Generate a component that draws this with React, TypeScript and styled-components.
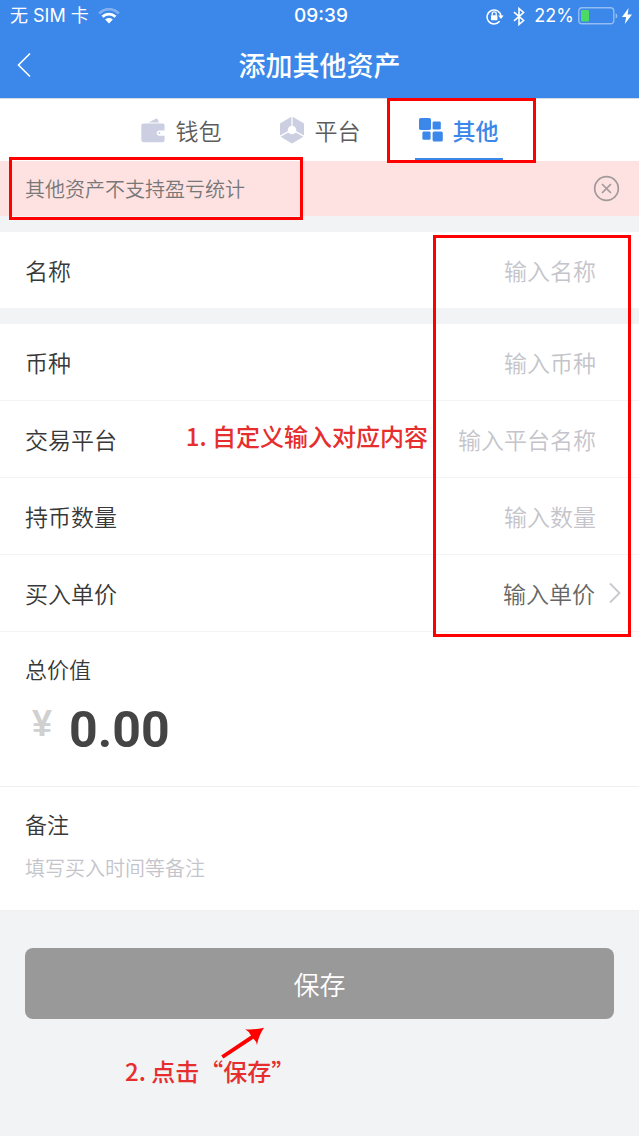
import React from 'react';
import styled, { createGlobalStyle } from 'styled-components';

const GlobalStyle = createGlobalStyle`
  * { box-sizing: border-box; }
  body {
    margin: 0;
    background: #f1f3f5;
    color: #383838;
    font-family: 'Noto Sans CJK SC', sans-serif;
    font-weight: 350;
  }
  button, input, textarea { font: inherit; color: inherit; margin: 0; }
  button { cursor: pointer; }
`;

const Page = styled.main`
  display: flex;
  flex-direction: column;
  min-height: 100vh;
`;

const Header = styled.header`
  background: #3b87ea;
  color: #fff;
  border-bottom: 1px solid #d3dbe6;
`;

const StatusBar = styled.div`
  display: grid;
  grid-template-columns: 1fr auto 1fr;
  align-items: center;
  height: 32px;
  padding: 0 7px 0 10px;
  font-family: Inter, 'Noto Sans CJK SC', sans-serif;
  font-size: 18px;
  font-weight: 400;
  line-height: 32px;
`;

const StatusGroup = styled.div<{ $end?: boolean }>`
  display: flex;
  align-items: center;
  gap: 9px;
  justify-content: ${p => (p.$end ? 'flex-end' : 'flex-start')};
`;

const Power = styled.div`
  display: flex;
  align-items: center;
  gap: 4px;
`;

const Clock = styled.time`
  font-size: 19px;
  font-weight: 500;
`;

const NavBar = styled.div`
  display: grid;
  grid-template-columns: 48px 1fr 48px;
  align-items: center;
  height: 66px;
`;

const BackButton = styled.button`
  display: flex;
  align-items: center;
  height: 48px;
  padding: 0 0 0 17px;
  border: 0;
  background: none;
`;

const Title = styled.h1`
  margin: 0;
  text-align: center;
  font-size: 27px;
  line-height: 40px;
  font-weight: 500;
`;

const Tabs = styled.div`
  display: flex;
  justify-content: center;
  gap: 51px;
  height: 62px;
  background: #fff;
`;

const Tab = styled.button<{ $active?: boolean }>`
  position: relative;
  display: flex;
  align-items: center;
  justify-content: center;
  gap: 10px;
  width: 88px;
  padding: 2px 0 0;
  border: 0;
  border-bottom: 3px solid ${p => (p.$active ? '#3b87ea' : 'transparent')};
  background: none;
  color: ${p => (p.$active ? '#3b87ea' : '#5c5c5c')};
  font-weight: ${p => (p.$active ? 500 : 350)};
  font-size: 23px;
  line-height: 32px;
  white-space: nowrap;
`;

const Highlight = styled.span`
  position: absolute;
  z-index: 2;
  border: 3px solid #fe0000;
  pointer-events: none;
`;

const TabHighlight = styled(Highlight)`
  inset: -1px -33px -5px -28px;
`;

const NoticeHighlight = styled(Highlight)`
  inset: -4px auto -4px 9px;
  width: 294px;
`;

const FieldsHighlight = styled(Highlight)`
  inset: 3px 8px -5px auto;
  width: 198px;
`;

const Notice = styled.div`
  position: relative;
  display: flex;
  align-items: center;
  justify-content: space-between;
  height: 55px;
  padding: 0 19px 0 25px;
  background: #fee2e2;
  color: #777;
  font-size: 20px;
  line-height: 28px;
`;

const CloseButton = styled.button`
  display: flex;
  padding: 0;
  border: 0;
  background: none;
`;

const Fields = styled.div`
  position: relative;
  display: flex;
  flex-direction: column;
  gap: 15px;
  margin-top: 16px;
`;

const Group = styled.div`
  background: #fff;
`;

const Row = styled.div`
  display: flex;
  align-items: center;
  height: 77px;
  padding: 0 17px 0 25px;
  border-bottom: 1px solid #f3f4f5;
  font-size: 23px;
  line-height: 32px;
`;

const RowInput = styled.input`
  flex: 1;
  min-width: 0;
  padding: 0 26px 0 0;
  border: 0;
  outline: 0;
  background: none;
  text-align: right;
  &::placeholder { color: #c4c4ca; opacity: 1; }
`;

const PickerButton = styled.button`
  display: flex;
  flex: 1;
  align-items: center;
  justify-content: flex-end;
  gap: 13px;
  padding: 0;
  border: 0;
  background: none;
  color: #666;
`;

const Block = styled.section`
  padding: 20px 25px 28px;
  background: #fff;
  border-bottom: 1px solid #eff0f1;
`;

const BlockLabel = styled.label`
  display: block;
  font-size: 22px;
  line-height: 32px;
`;

const Amount = styled.output`
  display: flex;
  align-items: center;
  gap: 17px;
  margin-top: 18px;
  padding-left: 7px;
  line-height: 56px;
`;

const Currency = styled.span`
  padding-bottom: 12px;
  color: #d0d0d0;
  font-family: 'Liberation Sans', sans-serif;
  font-size: 36px;
  font-weight: 700;
  line-height: 44px;
`;

const Value = styled.span`
  color: #444;
  font-family: Roboto, sans-serif;
  font-size: 50px;
  font-weight: 700;
`;

const Note = styled.textarea`
  display: block;
  width: 100%;
  height: 28px;
  margin-top: 15px;
  padding: 0;
  border: 0;
  outline: 0;
  resize: none;
  overflow: hidden;
  font-size: 20px;
  line-height: 28px;
  &::placeholder { color: #c4c4ca; opacity: 1; }
`;

const Footer = styled.div`
  position: relative;
  padding: 37px 25px 118px;
`;

const SaveButton = styled.button`
  width: 100%;
  height: 71px;
  border: 0;
  border-radius: 8px;
  background: #999;
  color: #fff;
  font-size: 26px;
  line-height: 40px;
`;

const Callout = styled.p`
  position: absolute;
  z-index: 3;
  margin: 0;
  color: #e62e2e;
  font-size: 24px;
  font-weight: 500;
  line-height: 32px;
  white-space: nowrap;
  pointer-events: none;
`;

const FieldsCallout = styled(Callout)`
  top: 188px;
  right: 211px;
`;

const SaveCallout = styled(Callout)`
  top: 144px;
  left: 125px;
`;

const Arrow = styled.svg`
  position: absolute;
  top: 115px;
  left: 220px;
`;

const Wifi = () => (
  <svg width="22" height="16" viewBox="0 0 22 16" fill="none" stroke="#fff" aria-hidden="true">
    <path d="M1.2 5.4C6.7-.2 15.3-.2 20.8 5.4" strokeWidth="2.8" opacity=".35" />
    <path d="M4.5 8.8c3.7-3.7 9.3-3.7 13 0" strokeWidth="2.8" />
    <path d="M7.2 11.6c2.2-2 5.4-2 7.6 0L11 15.6z" fill="#fff" stroke="none" />
  </svg>
);

const RotationLock = () => (
  <svg width="18" height="17" viewBox="0 0 18 17" fill="none" stroke="#fff" aria-hidden="true">
    <path d="M13.600 13.200A7 7 0 1 1 15 8" strokeWidth="1.5" />
    <path d="M12.2 7.6h5.4L15 11z" fill="#fff" stroke="none" />
    <rect x="5" y="7.2" width="6.4" height="5" rx=".6" fill="#fff" stroke="none" />
    <path d="M6.2 7.6V5.8a2 2 0 0 1 4 0v1.8" strokeWidth="1.3" />
  </svg>
);

const Bluetooth = () => (
  <svg width="12" height="19" viewBox="0 0 12 19" fill="none" stroke="#fff" strokeWidth="1.6" aria-hidden="true">
    <path d="M1 5.2l9.600 8.300L6 17.500v-16l4.600 4L1 13.800" />
  </svg>
);

const Battery = () => (
  <svg width="40" height="18" viewBox="0 0 40 18" aria-hidden="true">
    <rect x=".8" y=".8" width="35" height="16" rx="3.4" fill="none" stroke="#fff" strokeOpacity=".45" strokeWidth="1.4" />
    <rect x="3" y="3" width="8" height="11.6" rx="1" fill="#4cd964" />
    <path d="M37.6 6.2c2.4.8 2.4 4.6 0 5.4z" fill="#fff" opacity=".45" />
  </svg>
);

const Bolt = () => (
  <svg width="10" height="16" viewBox="0 0 10 16" fill="#fff" aria-hidden="true">
    <path d="M6.6 0L0 9h4.2L2.8 16 10 6.4H5.6z" />
  </svg>
);

const Wallet = () => (
  <svg width="26" height="26" viewBox="0 0 26 26" fill="#cccfe1" aria-hidden="true">
    <path d="M8.600 5.400l7.200-3.600c.8-.4 1.300-.2 1.700.5l1.600 3.100z" />
    <path d="M3.500 6.400h19A2 2 0 0 1 24.600 8.400v5h-5.200a2.700 2.700 0 0 0 0 5.400h5.200v4.500a2 2 0 0 1-2 2h-19a2.300 2.300 0 0 1-2.300-2.300V8.600a2.200 2.200 0 0 1 2.200-2.200z" />
    <circle cx="19.400" cy="16.100" r="1" />
  </svg>
);

const Cube = () => (
  <svg width="26" height="28" viewBox="0 0 26 28" fill="#cccfe1" aria-hidden="true">
    <path d="M12.400 .8v9.400L8.200 15.600 1 19.600V8.200c0-.6.200-.9.700-1.200z" />
    <path d="M13.600 .8v9.400l4.200 5.400 7.200 4V8.200c0-.6-.2-.9-.7-1.200z" />
    <path d="M8.800 16.800h8.400l7.200 4L14 26.900c-.8.400-1.200.4-2 0L1.600 20.800z" />
    <circle cx="13" cy="14" r="4.200" fill="#fff" />
  </svg>
);

const Tiles = () => (
  <svg width="24" height="24" viewBox="0 0 24 24" fill="#3b87ea" aria-hidden="true">
    <rect x="0" y="0" width="12" height="12" rx="1.800" />
    <rect x="13.600" y="3.400" width="8.200" height="8.200" rx="1.400" />
    <rect x="3.400" y="13.600" width="8.200" height="8.200" rx="1.400" />
    <rect x="13.600" y="13.400" width="10.200" height="10.200" rx="1.600" />
  </svg>
);

interface FieldProps {
  id: string;
  label: string;
  placeholder: string;
}

const Field = ({ id, label, placeholder }: FieldProps) => (
  <Row>
    <label htmlFor={id}>{label}</label>
    <RowInput id={id} placeholder={placeholder} />
  </Row>
);

export default function App() {
  return (
    <Page>
      <GlobalStyle />
      <Header>
        <StatusBar>
          <StatusGroup>
            <span>无 SIM 卡</span>
            <Wifi />
          </StatusGroup>
          <Clock>09:39</Clock>
          <StatusGroup $end>
            <RotationLock />
            <Bluetooth />
            <Power>
              <span>22%</span>
              <Battery />
              <Bolt />
            </Power>
          </StatusGroup>
        </StatusBar>
        <NavBar>
          <BackButton aria-label="返回">
            <svg width="14" height="26" viewBox="0 0 14 26" fill="none" stroke="#fff" strokeWidth="1.600">
              <path d="M13 1.500L1.500 13 13 24.500" />
            </svg>
          </BackButton>
          <Title>添加其他资产</Title>
        </NavBar>
      </Header>

      <Tabs role="tablist">
        <Tab role="tab" aria-selected={false}><Wallet />钱包</Tab>
        <Tab role="tab" aria-selected={false}><Cube />平台</Tab>
        <Tab role="tab" aria-selected $active>
          <Tiles />其他
          <TabHighlight />
        </Tab>
      </Tabs>

      <Notice>
        <span>其他资产不支持盈亏统计</span>
        <CloseButton aria-label="关闭">
          <svg width="27" height="27" viewBox="0 0 27 27" fill="none" stroke="#a09a9a" strokeWidth="1.700">
            <circle cx="13.500" cy="13.500" r="11.800" />
            <path d="M9 9l9 9M18 9l-9 9" />
          </svg>
        </CloseButton>
        <NoticeHighlight />
      </Notice>

      <Fields>
        <Group>
          <Field id="name" label="名称" placeholder="输入名称" />
        </Group>
        <Group>
          <Field id="coin" label="币种" placeholder="输入币种" />
          <Field id="platform" label="交易平台" placeholder="输入平台名称" />
          <Field id="quantity" label="持币数量" placeholder="输入数量" />
          <Row>
            <label htmlFor="price">买入单价</label>
            <PickerButton id="price">
              输入单价
              <svg width="14" height="22" viewBox="0 0 14 22" fill="none" stroke="#c8c8ce" strokeWidth="1.800">
                <path d="M2 1.500l9.500 9.500L2 20.500" />
              </svg>
            </PickerButton>
          </Row>
        </Group>
        <FieldsHighlight />
        <FieldsCallout>1. 自定义输入对应内容</FieldsCallout>
      </Fields>

      <Block>
        <BlockLabel htmlFor="total">总价值</BlockLabel>
        <Amount id="total">
          <Currency>¥</Currency>
          <Value>0.00</Value>
        </Amount>
      </Block>
      <Block>
        <BlockLabel htmlFor="note">备注</BlockLabel>
        <Note id="note" rows={1} placeholder="填写买入时间等备注" />
      </Block>

      <Footer>
        <SaveButton>保存</SaveButton>
        <Arrow width="46" height="34" viewBox="0 0 46 34" fill="#fe0000" aria-hidden="true">
          <path d="M1.200 29.600L31 9.400Q29.500 5.600 25.200 3.200Q34 4 44 1.800Q38.500 10 37 19Q36.300 15 33.400 12.800L3.400 32.400z" />
        </Arrow>
        <SaveCallout>2. 点击“保存”</SaveCallout>
      </Footer>
    </Page>
  );
}
